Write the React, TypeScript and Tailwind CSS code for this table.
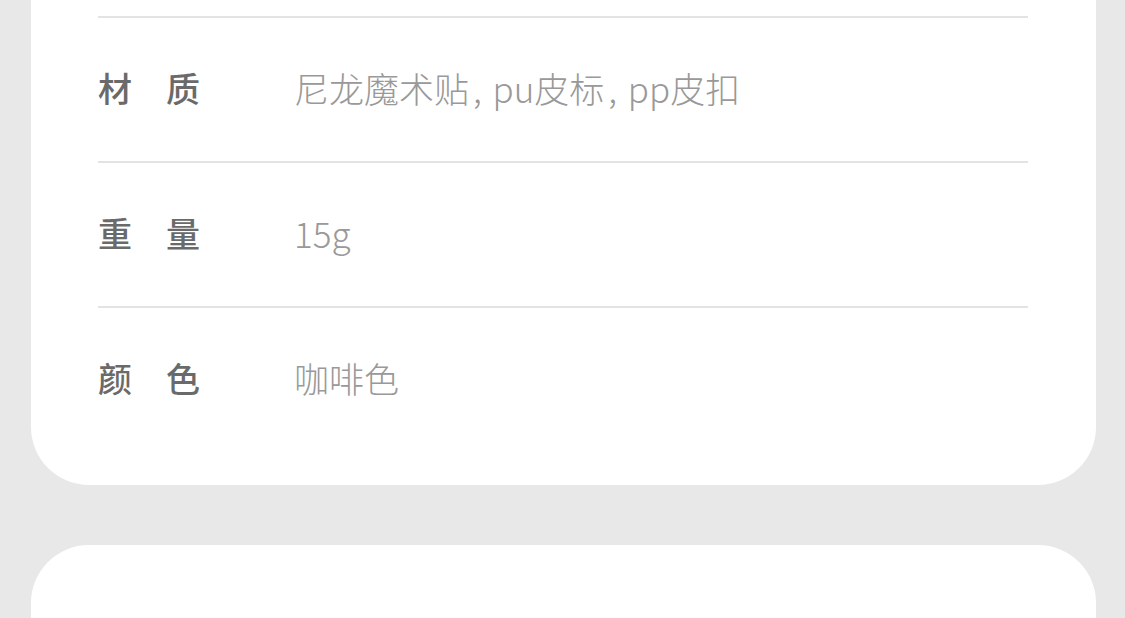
const rows = [
  { label: '材　质', value: ['尼龙魔术贴', 'pu皮标', 'pp皮扣'] },
  { label: '重　量', value: ['15g'] },
  { label: '颜　色', value: ['咖啡色'] },
];

export default function App() {
  return (
    <div
      className="h-[618px] w-[1125px] overflow-hidden bg-[#e8e8e8]"
      style={{ fontFamily: '"Noto Sans CJK SC", "Noto Sans", sans-serif' }}
    >
      <div className="-mt-[44px] ml-[31px] mr-[29px] rounded-b-[58px] bg-white pb-[34px] pl-[67px] pr-[68px]">
        <div className="h-[60px]" />
        {rows.map((r) => (
          <div key={r.label} className="flex h-[145px] items-center border-t-2 border-[#e3e3e3] pb-[4px]">
            <div className="w-[196px] text-[34px] font-medium leading-none text-[#6a6a6a]">{r.label}</div>
            <div className="text-[35px] font-extralight leading-none text-[#999999]">
              {r.value.map((part, i) => (
                <span key={part}>
                  {i > 0 && <span className="ml-[4px] mr-[3px]">, </span>}
                  {part}
                </span>
              ))}
            </div>
          </div>
        ))}
      </div>
      <div className="ml-[31px] mr-[29px] mt-[60px] h-[200px] rounded-t-[58px] bg-white" />
    </div>
  );
}
